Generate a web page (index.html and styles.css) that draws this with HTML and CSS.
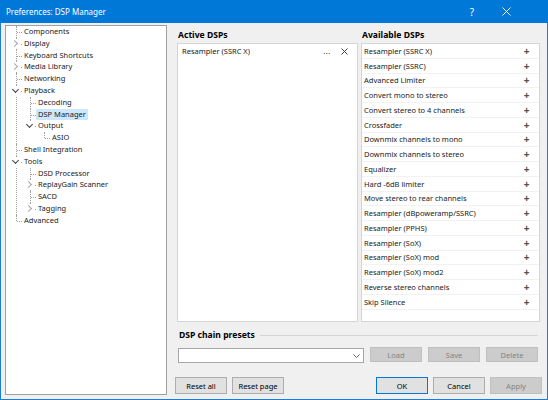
FILE: index.html
```html
<!DOCTYPE html>
<html lang="en">

<head>
    <meta charset="UTF-8">
    <meta name="viewport" content="width=device-width, initial-scale=1.0">
    <title>Preferences: DSP Manager</title>
    <link rel="stylesheet" href="styles.css">
</head>

<body>
    <div class="window">
        <div class="titlebar">
            <span class="title">Preferences: DSP Manager</span>
            <span class="cap-btn help">?</span>
            <span class="cap-btn close">
                <svg width="9" height="9" viewBox="0 0 9 9">
                    <path d="M0.5 0.5 L8.5 8.5 M8.5 0.5 L0.5 8.5" stroke="#fff" stroke-width="1" fill="none" />
                </svg>
            </span>
        </div>

        <div class="content">
            <div class="tree">
                <ul>
                    <li><span class="node"><span class="label">Components</span></span></li>
                    <li><span class="node"><span class="exp closed"></span><span class="label">Display</span></span></li>
                    <li><span class="node"><span class="label">Keyboard Shortcuts</span></span></li>
                    <li><span class="node"><span class="exp closed"></span><span class="label">Media Library</span></span></li>
                    <li><span class="node"><span class="label">Networking</span></span></li>
                    <li>
                        <span class="node"><span class="exp open"></span><span class="label">Playback</span></span>
                        <ul>
                            <li><span class="node"><span class="label">Decoding</span></span></li>
                            <li><span class="node"><span class="label selected">DSP Manager</span></span></li>
                            <li>
                                <span class="node"><span class="exp open"></span><span class="label">Output</span></span>
                                <ul>
                                    <li><span class="node"><span class="label">ASIO</span></span></li>
                                </ul>
                            </li>
                        </ul>
                    </li>
                    <li><span class="node"><span class="label">Shell Integration</span></span></li>
                    <li>
                        <span class="node"><span class="exp open"></span><span class="label">Tools</span></span>
                        <ul>
                            <li><span class="node"><span class="label">DSD Processor</span></span></li>
                            <li><span class="node"><span class="exp closed"></span><span class="label">ReplayGain Scanner</span></span></li>
                            <li><span class="node"><span class="label">SACD</span></span></li>
                            <li><span class="node"><span class="exp closed"></span><span class="label">Tagging</span></span></li>
                        </ul>
                    </li>
                    <li><span class="node"><span class="label">Advanced</span></span></li>
                </ul>
            </div>

            <div class="page">
                <div class="lists">
                    <div class="col">
                        <div class="heading">Active DSPs</div>
                        <div class="listbox">
                            <div class="item active-item">
                                <span class="name">Resampler (SSRC X)</span>
                                <span class="more">...</span>
                                <span class="remove">
                                    <svg width="7" height="7" viewBox="0 0 7 7">
                                        <path d="M0.5 0.5 L6.5 6.5 M6.5 0.5 L0.5 6.5" stroke="#444" stroke-width="1" fill="none" />
                                    </svg>
                                </span>
                            </div>
                        </div>
                    </div>
                    <div class="col">
                        <div class="heading">Available DSPs</div>
                        <div class="listbox">
                            <div class="item"><span class="name">Resampler (SSRC X)</span><span class="add">+</span></div>
                            <div class="item"><span class="name">Resampler (SSRC)</span><span class="add">+</span></div>
                            <div class="item"><span class="name">Advanced Limiter</span><span class="add">+</span></div>
                            <div class="item"><span class="name">Convert mono to stereo</span><span class="add">+</span></div>
                            <div class="item"><span class="name">Convert stereo to 4 channels</span><span class="add">+</span></div>
                            <div class="item"><span class="name">Crossfader</span><span class="add">+</span></div>
                            <div class="item"><span class="name">Downmix channels to mono</span><span class="add">+</span></div>
                            <div class="item"><span class="name">Downmix channels to stereo</span><span class="add">+</span></div>
                            <div class="item"><span class="name">Equalizer</span><span class="add">+</span></div>
                            <div class="item"><span class="name">Hard -6dB limiter</span><span class="add">+</span></div>
                            <div class="item"><span class="name">Move stereo to rear channels</span><span class="add">+</span></div>
                            <div class="item"><span class="name">Resampler (dBpoweramp/SSRC)</span><span class="add">+</span></div>
                            <div class="item"><span class="name">Resampler (PPHS)</span><span class="add">+</span></div>
                            <div class="item"><span class="name">Resampler (SoX)</span><span class="add">+</span></div>
                            <div class="item"><span class="name">Resampler (SoX) mod</span><span class="add">+</span></div>
                            <div class="item"><span class="name">Resampler (SoX) mod2</span><span class="add">+</span></div>
                            <div class="item"><span class="name">Reverse stereo channels</span><span class="add">+</span></div>
                            <div class="item"><span class="name">Skip Silence</span><span class="add">+</span></div>
                        </div>
                    </div>
                </div>

                <div class="presets">
                    <div class="group-label">
                        <span>DSP chain presets</span>
                        <span class="rule"></span>
                    </div>
                    <div class="preset-row">
                        <div class="combo">
                            <svg width="7" height="4" viewBox="0 0 7 4">
                                <path d="M0.5 0.5 L3.5 3.5 L6.5 0.5" stroke="#666" stroke-width="1" fill="none" />
                            </svg>
                        </div>
                        <button class="btn small" disabled>Load</button>
                        <button class="btn small" disabled>Save</button>
                        <button class="btn small" disabled>Delete</button>
                    </div>
                </div>

                <div class="footer">
                    <button class="btn">Reset all</button>
                    <button class="btn">Reset page</button>
                    <span class="spacer"></span>
                    <button class="btn default">OK</button>
                    <button class="btn">Cancel</button>
                    <button class="btn" disabled>Apply</button>
                </div>
            </div>
        </div>
    </div>
</body>

</html>
```

FILE: styles.css
```css
html,
body {
    margin: 0;
    padding: 0;
}

body {
    width: 548px;
    height: 400px;
    background-color: #f0f0f0;
    font-family: "Noto Sans", "Liberation Sans", sans-serif;
    font-size: 7.5px;
    color: #1a1a1a;
}

.window {
    width: 548px;
    height: 400px;
    display: flex;
    flex-direction: column;
}

/* title bar */
.titlebar {
    height: 23px;
    flex: none;
    display: flex;
    align-items: center;
    padding-left: 6px;
    padding-right: 25px;
    background-color: #0078d7;
    color: #fff;
    font-size: 8px;
}

.title {
    flex: 1;
}

.cap-btn {
    width: 34px;
    height: 23px;
    display: flex;
    align-items: center;
    justify-content: center;
}

.help {
    font-size: 10px;
}

/* window body */
.content {
    flex: 1;
    display: flex;
    min-height: 0;
    padding: 2px 4px 4px 4px;
    border: 1px solid #1a7fd4;
    border-top: 0;
}

/* tree */
.tree {
    width: 162px;
    flex: none;
    box-sizing: border-box;
    border: 1px solid #a0a0a0;
    background-color: #fff;
}

.tree ul {
    list-style: none;
    margin: 0;
    padding: 0 0 0 8px;
}

.tree > ul {
    padding-left: 10px;
}

.tree li {
    position: relative;
    padding-left: 6px;
}

.tree li::before {
    content: "";
    position: absolute;
    left: 0;
    top: 0;
    bottom: 0;
    border-left: 1px dotted #a0a0a0;
}

.tree li:last-child::before {
    bottom: auto;
    height: 6px;
}

.node {
    display: block;
    position: relative;
    height: 11.8px;
    line-height: 11.8px;
    white-space: nowrap;
}

.node::before {
    content: "";
    position: absolute;
    left: -5px;
    top: 6px;
    width: 5px;
    border-top: 1px dotted #a0a0a0;
}

.label {
    display: inline-block;
    padding: 0 2px;
    height: 11.8px;
}

.label.selected {
    background-color: #cce8ff;
}

.exp {
    position: absolute;
    left: -10px;
    top: 1px;
    width: 8px;
    height: 10px;
    background-color: #fff;
    z-index: 1;
}

.exp::after {
    content: "";
    position: absolute;
    width: 4px;
    height: 4px;
    border-right: 1px solid #a6a6a6;
    border-bottom: 1px solid #a6a6a6;
}

.exp.closed::after {
    left: 0;
    top: 2px;
    transform: rotate(-45deg);
}

.exp.open::after {
    left: 1px;
    top: 1px;
    border-color: #404040;
    transform: rotate(45deg);
}

/* right page */
.page {
    flex: 1;
    display: flex;
    flex-direction: column;
    margin-left: 8px;
    margin-right: 1px;
}

.lists {
    display: grid;
    grid-template-columns: 181px 1fr;
    column-gap: 3px;
    padding: 0 2px;
}

.heading {
    height: 18px;
    line-height: 20px;
    padding-left: 1px;
    font-size: 8.6px;
    font-weight: bold;
    color: #000;
}

.listbox {
    height: 279px;
    box-sizing: border-box;
    border: 1px solid #d5d5d5;
    background-color: #fff;
}

.item {
    height: 14.75px;
    box-sizing: border-box;
    display: flex;
    align-items: center;
    padding-left: 2px;
    padding-right: 9px;
    border-bottom: 1px solid #f2f2f2;
    white-space: nowrap;
}

.item .name {
    flex: 1;
}

.add {
    width: 7px;
    text-align: center;
    font-size: 10px;
    font-weight: bold;
    color: #505050;
}

.active-item {
    padding-left: 4px;
    border-bottom: 0;
}

.more {
    width: 12px;
    margin-right: 8px;
    text-align: center;
    letter-spacing: 0.5px;
    color: #333;
}

.remove {
    display: flex;
}

/* presets */
.presets {
    margin-top: 6px;
}

.group-label {
    display: flex;
    align-items: center;
    height: 14px;
    padding-left: 4px;
    font-size: 8.6px;
    font-weight: bold;
    color: #000;
}

.rule {
    flex: 1;
    height: 1px;
    margin-left: 5px;
    margin-right: 4px;
    background-color: #d5d5d5;
}

.preset-row {
    display: flex;
    gap: 6px;
    margin-top: 5px;
    padding-left: 3px;
}

.combo {
    width: 186px;
    height: 15px;
    margin-top: 1px;
    box-sizing: border-box;
    border: 1px solid #a6a6a6;
    background-color: #fff;
    display: flex;
    align-items: center;
    justify-content: flex-end;
    padding-right: 3px;
}

/* buttons */
.btn {
    width: 52px;
    height: 17px;
    padding: 0;
    box-sizing: border-box;
    border: 1px solid #adadad;
    background-color: #e1e1e1;
    font-family: inherit;
    font-size: 7.5px;
    color: #000;
}

.btn.small {
    height: 15px;
}

.btn:disabled {
    background-color: #cccccc;
    border-color: #bfbfbf;
    color: #838383;
}

.btn.default {
    border-color: #0078d7;
}

.footer {
    display: flex;
    gap: 5px;
    margin-top: 14px;
}

.spacer {
    flex: 1;
}
```
